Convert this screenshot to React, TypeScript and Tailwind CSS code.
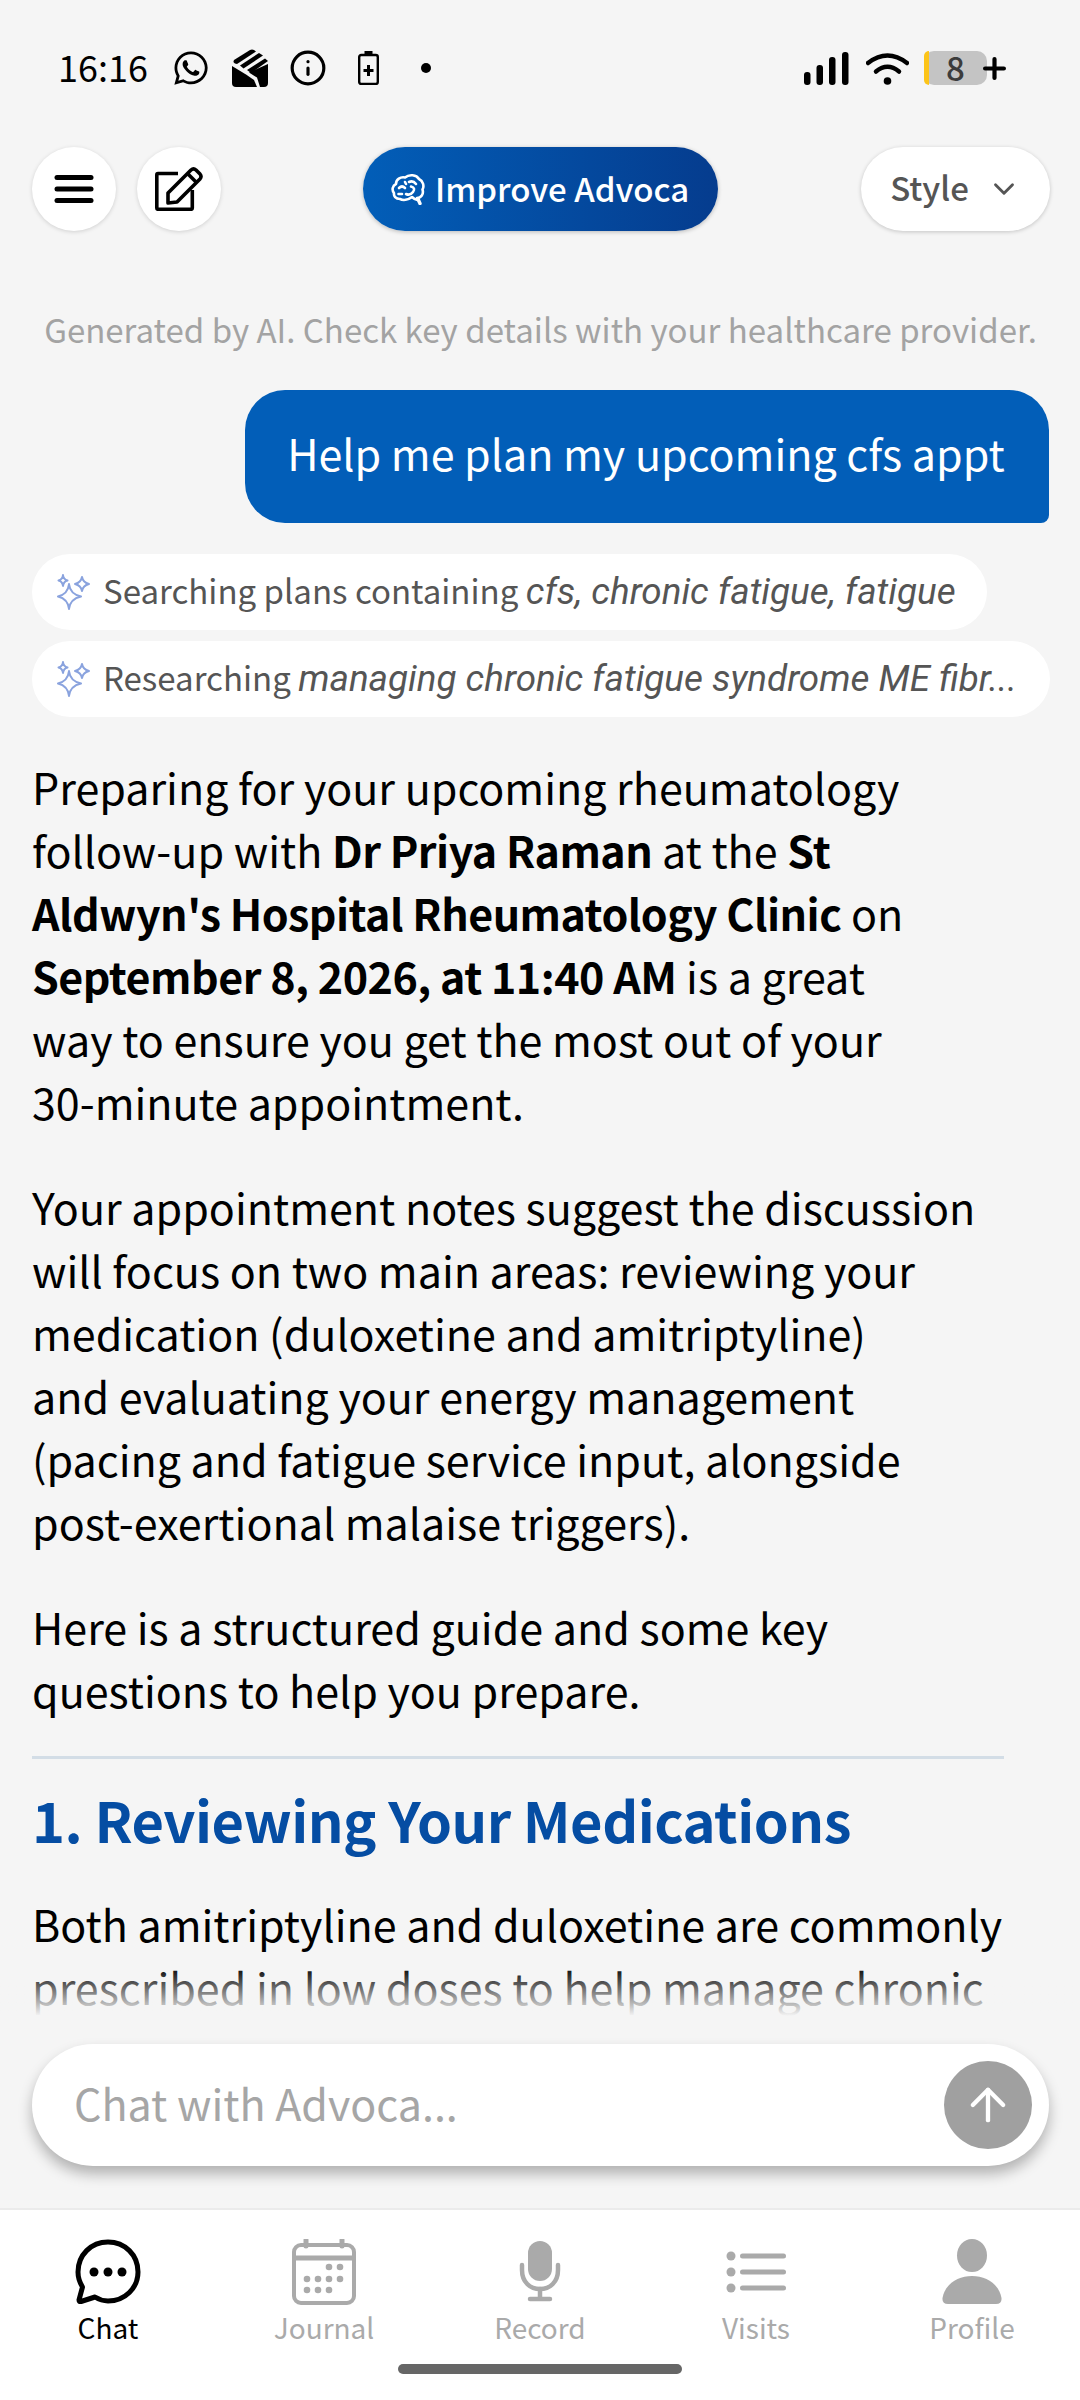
import React from 'react';
import { ChevronDown, ArrowUp, Info } from 'lucide-react';
import { FaWhatsapp } from 'react-icons/fa';

const font = "font-['Noto_Sans_CJK_JP','Noto_Sans',sans-serif]";

function MailStack() {
  return (
    <svg viewBox="0 0 38 38" className="w-[38px] h-[38px]">
      <path d="M1 17 L15 25.500 L23 31 L26 38 L5 38 Q1 38 1 34 Z" fill="#000" />
      <path d="M37 15 V34 Q37 38 33 38 H29 L26 28.500 L18 23.500 Z" fill="#000" />
      <path d="M3 11 L19 1 Q21 0 23 1 L25 2.500 L6 15 Q1 14 3 11 Z" fill="#000" />
      <path d="M9 16.500 L28 4 L32 6.500 L12.500 19.500 Z" fill="#000" />
      <path d="M16 21 L34 9.500 L37 12 L20 24 Z" fill="#000" />
    </svg>
  );
}

function BatterySaver() {
  return (
    <svg viewBox="0 0 21 34" className="w-[21px] h-[34px]">
      <rect x="6.500" y="0" width="8" height="4" fill="#000" />
      <rect x="1.200" y="4" width="18.600" height="29" rx="2" fill="none" stroke="#000" strokeWidth="2.400" />
      <path d="M10.500 14 V25 M5.500 19.500 H15.500" stroke="#000" strokeWidth="3" />
    </svg>
  );
}

function Signal() {
  return (
    <svg viewBox="0 0 45 33" className="w-[45px] h-[33px]">
      <rect x="0" y="20" width="6.500" height="13" rx="3" fill="#000" />
      <rect x="12.500" y="13" width="6.500" height="20" rx="3" fill="#000" />
      <rect x="25" y="5" width="6.500" height="28" rx="3" fill="#000" />
      <rect x="38" y="0" width="6.500" height="33" rx="3" fill="#000" />
    </svg>
  );
}

function Wifi() {
  return (
    <svg viewBox="0 0 43 33" className="w-[43px] h-[33px]" fill="none" stroke="#000" strokeLinecap="round">
      <path d="M2 11 Q21.500 -4 41 11" strokeWidth="4.500" />
      <path d="M10 19.500 Q21.500 10 33 19.500" strokeWidth="4.500" />
      <circle cx="21.500" cy="29" r="3.800" fill="#000" stroke="none" />
    </svg>
  );
}

function HamburgerIcon() {
  return (
    <svg viewBox="0 0 40 28" className="w-[40px] h-[28px]">
      {[2.500, 14, 25.500].map((y) => (
        <rect key={y} x="0.500" y={y - 2.500} width="39" height="5" rx="2.500" fill="#000" />
      ))}
    </svg>
  );
}

function EditIcon() {
  return (
    <svg viewBox="0 0 48 44" className="w-[48px] h-[44px]" fill="none" stroke="#000" strokeWidth="3.600" strokeLinejoin="round">
      <path d="M23 6.500 H3 Q1.800 6.500 1.800 8 V41 Q1.800 42.300 3 42.300 H36 Q37.300 42.300 37.300 41 V23" />
      <path d="M13 26 L36 3 Q38.500 0.800 41 3 L45 7 Q47 9.500 45 12 L22 35 L13 36 Z" fill="#fff" />
      <path d="M33 7 L41 15" />
    </svg>
  );
}

function BrainIcon() {
  return (
    <svg viewBox="0 0 34 32" className="w-[34px] h-[32px]" fill="none" stroke="#fff" strokeWidth="2.600" strokeLinecap="round" strokeLinejoin="round">
      <path d="M9 26 C4.500 26 2.500 23 3 20 C0.500 17 1.500 12.500 5 11 C5 6.500 9.500 3.500 14 4.500 C18 1 25.500 1.500 28 6 C32 8 33.500 13 31.500 16.500 C33 21 30 25 26 25 L26.500 27 C24 26.500 22 25 21 24 C17 27 12 27.500 9 26 Z" />
      <path d="M27 26 L29 30.500" strokeWidth="3.400" />
      <path d="M8 15 Q11 12 14 15 M18 9 Q22 7 25 11 M15 21 Q19 23 22 19 Q25 15 20 13.500 M7.500 21 H11 M14 9 L15 11" />
    </svg>
  );
}

function ChatIcon() {
  return (
    <svg viewBox="0 0 66 66" className="w-[66px] h-[66px]">
      <path d="M33 3 C16 3 3 16 3 33 C3 39 5 44 7.500 48 L4 61 Q4 63 6 62.500 L20 58 C24 60.500 28 62 33 62 C50 62 63 49 63 33 C63 16 50 3 33 3 Z" fill="none" stroke="#000" strokeWidth="5" strokeLinejoin="round" />
      <circle cx="19" cy="33" r="4.500" fill="#000" />
      <circle cx="33" cy="33" r="4.500" fill="#000" />
      <circle cx="47" cy="33" r="4.500" fill="#000" />
    </svg>
  );
}

function JournalIcon() {
  const dots = [[37, 28], [48, 28], [15, 40], [26, 40], [37, 40], [48, 40], [15, 51], [26, 51], [37, 51]];
  return (
    <svg viewBox="0 0 64 66" className="w-[64px] h-[66px]">
      <rect x="2" y="6" width="60" height="58" rx="7" fill="none" stroke="#aaa" strokeWidth="4" />
      <path d="M2 19 H62" stroke="#aaa" strokeWidth="5" />
      <path d="M14 1 V7 M50 1 V7" stroke="#aaa" strokeWidth="5" strokeLinecap="round" />
      {dots.map(([x, y]) => (
        <circle key={`${x}-${y}`} cx={x} cy={y} r="3.300" fill="#aaa" />
      ))}
    </svg>
  );
}

function MicIcon() {
  return (
    <svg viewBox="0 0 60 66" className="w-[60px] h-[66px]">
      <rect x="18" y="2" width="24" height="40" rx="12" fill="#aaa" />
      <path d="M12 26 V31 C12 43 20 50 30 50 C40 50 48 43 48 31 V26" fill="none" stroke="#aaa" strokeWidth="4.500" strokeLinecap="round" />
      <path d="M30 50 V60 M20 60 H40" stroke="#aaa" strokeWidth="4.500" strokeLinecap="round" />
    </svg>
  );
}

function VisitsIcon() {
  return (
    <svg viewBox="0 0 60 44" className="w-[60px] h-[44px]">
      {[6, 22, 38].map((y) => (
        <g key={y}>
          <circle cx="5" cy={y} r="4.500" fill="#aaa" />
          <rect x="14" y={y - 2.500} width="46" height="5" rx="2.500" fill="#aaa" />
        </g>
      ))}
    </svg>
  );
}

function ProfileIcon() {
  return (
    <svg viewBox="0 0 60 66" className="w-[60px] h-[66px]">
      <ellipse cx="30" cy="16.500" rx="15" ry="16.500" fill="#aaa" />
      <path d="M0.500 59 C3 45 16 37 30 37 C44 37 57 45 59.500 59 Q60 65 54 65 H6 Q0 65 0.500 59 Z" fill="#aaa" />
    </svg>
  );
}

function Sparkles() {
  return (
    <svg viewBox="0 0 34 36" className="w-[34px] h-[36px] shrink-0" fill="none" stroke="#8aa3de" strokeWidth="2" strokeLinejoin="round">
      <path d="M12 10 Q13 20 24 22.500 Q13 25 12 35 Q11 25 1 22.500 Q11 20 12 10 Z" />
      <path d="M6 1 Q6.500 5.500 10.500 6.500 Q6.500 7.500 6 12 Q5.500 7.500 1.500 6.500 Q5.500 5.500 6 1 Z" />
      <path d="M25 3 Q26 8.500 32 10 Q26 11.500 25 17 Q24 11.500 18 10 Q24 8.500 25 3 Z" />
    </svg>
  );
}

function ToolChip({ label, query, className }: { label: string; query: string; className: string }) {
  return (
    <div className={`h-[76px] rounded-full bg-white flex items-center pl-[25px] ${className}`}>
      <Sparkles />
      <span className="ml-[12px] -mt-[2px] text-[33px] leading-[44px] text-[#555] whitespace-nowrap">
        {label}{' '}
        <em className="font-['Roboto',sans-serif] italic text-[36.800px]">{query}</em>
      </span>
    </div>
  );
}

function NavItem({ icon, label, active }: { icon: React.ReactNode; label: string; active?: boolean }) {
  return (
    <div className="flex-1 flex flex-col items-center">
      <div className="h-[66px] flex items-center justify-center">{icon}</div>
      <span className={`text-[28px] leading-[44px] ${active ? 'text-black' : 'text-[#aaa]'}`}>{label}</span>
    </div>
  );
}

export default function App() {
  return (
    <div className={`relative w-[1080px] h-[2400px] bg-[#f5f5f5] overflow-hidden flex flex-col ${font}`}>
      {/* status bar */}
      <div className="h-[147px] shrink-0 pt-[49px] pl-[58px] pr-[74px] flex items-start justify-between">
        <div className="flex items-center h-[38px]">
          <span className="text-[36px] leading-[38px] text-black w-[114px] -mt-[4px]">16:16</span>
          <FaWhatsapp className="w-[38px] h-[38px] text-black" />
          <div className="ml-[21px]"><MailStack /></div>
          <Info className="ml-[20px] w-[38px] h-[38px] -mx-[2px] text-black" strokeWidth={2} />
          <div className="ml-[33px]"><BatterySaver /></div>
          <span className="ml-[42px] w-[10px] h-[10px] rounded-full bg-black" />
        </div>
        <div className="flex items-center h-[38px]">
          <Signal />
          <div className="ml-[17px]"><Wifi /></div>
          <div className="ml-[15px] relative w-[63px] h-[34px] rounded-[10px] bg-[#c4c4c4] flex items-center justify-center">
            <span className="absolute left-0 top-0 bottom-0 w-[5px] rounded-l-[10px] bg-[#fcc419]" />
            <span className="text-[33px] leading-[34px] font-medium text-[#3c3c3c] -mt-[3px]">8</span>
          </div>
          <svg viewBox="0 0 22 22" className="w-[23px] h-[23px] -ml-[4px] relative">
            <path d="M11 2 V20 M2 11 H20" stroke="#000" strokeWidth="4" strokeLinecap="round" />
          </svg>
        </div>
      </div>

      {/* top actions */}
      <div className="relative shrink-0 h-[84px] pl-[32px] pr-[30px] flex items-center justify-between">
        <div className="flex gap-[21px]">
          <button className="w-[84px] h-[84px] rounded-full bg-white shadow-[0_1px_4px_rgba(0,0,0,0.15)] flex items-center justify-center">
            <HamburgerIcon />
          </button>
          <button className="w-[84px] h-[84px] rounded-full bg-white shadow-[0_1px_4px_rgba(0,0,0,0.15)] flex items-center justify-center">
            <EditIcon />
          </button>
        </div>
        <button className="absolute left-[363px] top-0 w-[355px] h-[84px] rounded-full bg-gradient-to-r from-[#025eb8] to-[#053c8e] shadow-[0_1px_4px_rgba(0,0,0,0.25)] flex items-center pl-[28px] gap-[10px] text-white">
          <BrainIcon />
          <span className="text-[33px] leading-[44px] font-medium -mt-[3px]">Improve Advoca</span>
        </button>
        <button className="w-[189px] h-[84px] rounded-full bg-white shadow-[0_1px_4px_rgba(0,0,0,0.2)] flex items-center justify-center gap-[18px] text-[#555]">
          <span className="text-[33px] leading-[44px] font-medium -mt-[5px]">Style</span>
          <ChevronDown className="w-[34px] h-[34px]" strokeWidth={2} />
        </button>
      </div>

      {/* conversation */}
      <div className="relative flex-1 min-h-0 overflow-hidden pl-[32px] pr-[31px]">
        <p className="mt-[76px] text-center text-[33px] leading-[44px] text-[#a3a3a3] whitespace-nowrap">
          Generated by AI. Check key details with your healthcare provider.
        </p>
        <div className="mt-[39px] flex justify-end">
          <div className="w-[804px] h-[133px] bg-[#025eb8] rounded-[40px] rounded-br-[8px] flex items-center justify-center text-white text-[43px] leading-[60px] whitespace-nowrap pb-[9px] pr-[2px]">
            Help me plan my upcoming cfs appt
          </div>
        </div>
        <div className="mt-[31px] flex flex-col items-start gap-[11px]">
          <ToolChip className="w-[955px]" label="Searching plans containing" query="cfs, chronic fatigue, fatigue" />
          <ToolChip className="w-[1018px]" label="Researching" query="managing chronic fatigue syndrome ME fibr..." />
        </div>

        <div className="mt-[38px] text-[43px] leading-[63px] text-black whitespace-nowrap">
          <p>
            Preparing for your upcoming rheumatology<br />
            follow-up with <b className="font-bold tracking-[-0.5px]">Dr Priya Raman</b> at the <b className="font-bold">St</b><br />
            <b className="font-bold tracking-[-0.5px]">Aldwyn's Hospital Rheumatology Clinic</b> on<br />
            <b className="font-bold tracking-[-0.5px]">September 8, 2026, at 11:40 AM</b> is a great<br />
            way to ensure you get the most out of your<br />
            30-minute appointment.
          </p>
          <p className="mt-[42px]">
            Your appointment notes suggest the discussion<br />
            will focus on two main areas: reviewing your<br />
            medication (duloxetine and amitriptyline)<br />
            and evaluating your energy management<br />
            (pacing and fatigue service input, alongside<br />
            post-exertional malaise triggers).
          </p>
          <p className="mt-[42px]">
            Here is a structured guide and some key<br />
            questions to help you prepare.
          </p>
          <hr className="mt-[35px] w-[972px] border-0 h-[3px] bg-[#d3dde6]" />
          <h2 className="mt-[22px] text-[56px] leading-[76px] font-bold tracking-[-0.5px] text-[#054da3]">1. Reviewing Your Medications</h2>
          <p className="mt-[35px]">
            Both amitriptyline and duloxetine are commonly<br />
            prescribed in low doses to help manage chronic
          </p>
        </div>

        {/* fade + input */}
        <div className="absolute left-0 right-0 bottom-[42px] h-[200px] pointer-events-none">
          <div className="h-[50px] bg-gradient-to-b from-transparent to-[#f5f5f5]" />
          <div className="h-[150px] bg-[#f5f5f5]" />
        </div>
        <div className="absolute left-[32px] bottom-[42px] w-[1017px] h-[122px] rounded-full bg-white shadow-[0_8px_14px_rgba(0,0,0,0.28)] flex items-center justify-between pl-[42px] pr-[17px]">
          <span className="text-[43px] leading-[60px] text-[#a6a6a6] -mt-[6px]">Chat with Advoca...</span>
          <span className="w-[88px] h-[88px] rounded-full bg-[#a0a0a0] flex items-center justify-center">
            <ArrowUp className="w-[52px] h-[52px] text-white" strokeWidth={2} />
          </span>
        </div>
      </div>

      {/* bottom nav */}
      <div className="relative shrink-0 h-[192px] bg-white border-t-2 border-[#ebebeb] pt-[29px] flex">
        <NavItem icon={<ChatIcon />} label="Chat" active />
        <NavItem icon={<JournalIcon />} label="Journal" />
        <NavItem icon={<MicIcon />} label="Record" />
        <NavItem icon={<VisitsIcon />} label="Visits" />
        <NavItem icon={<ProfileIcon />} label="Profile" />
        <div className="absolute left-[398px] top-[154px] w-[284px] h-[10px] rounded-full bg-[#666]" />
      </div>
    </div>
  );
}
